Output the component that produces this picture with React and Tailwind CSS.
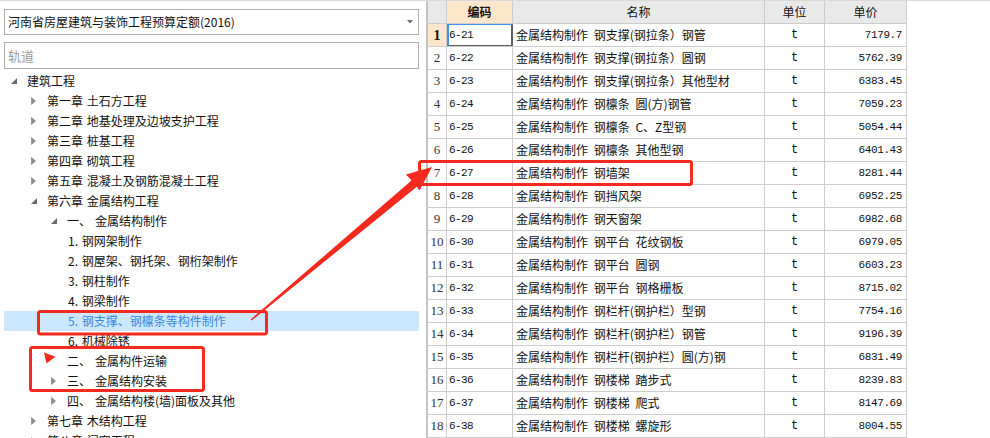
import React from "react";

const tree = [
  { lv: 0, icon: "open", text: "建筑工程" },
  { lv: 1, icon: "closed", text: "第一章 土石方工程" },
  { lv: 1, icon: "closed", text: "第二章 地基处理及边坡支护工程" },
  { lv: 1, icon: "closed", text: "第三章 桩基工程" },
  { lv: 1, icon: "closed", text: "第四章 砌筑工程" },
  { lv: 1, icon: "closed", text: "第五章 混凝土及钢筋混凝土工程" },
  { lv: 1, icon: "open", text: "第六章 金属结构工程" },
  { lv: 2, icon: "open", num: "一、", text: "金属结构制作" },
  { lv: 3, text: "1. 钢网架制作" },
  { lv: 3, text: "2. 钢屋架、钢托架、钢桁架制作" },
  { lv: 3, text: "3. 钢柱制作" },
  { lv: 3, text: "4. 钢梁制作" },
  { lv: 3, text: "5. 钢支撑、钢檩条等构件制作", selected: true },
  { lv: 3, text: "6. 机械除锈" },
  { lv: 2, num: "二、", text: "金属构件运输" },
  { lv: 2, icon: "closed", num: "三、", text: "金属结构安装" },
  { lv: 2, icon: "closed", num: "四、", text: "金属结构楼(墙)面板及其他" },
  { lv: 1, icon: "closed", text: "第七章 木结构工程" },
  { lv: 1, icon: "closed", text: "第八章 门窗工程" },
];

const indent = ["w-[4px]", "w-[24px]", "w-[44px]", "w-[64px]"];

const rows = [
  ["6-21", "金属结构制作 钢支撑(钢拉条）钢管", "7179.7"],
  ["6-22", "金属结构制作 钢支撑(钢拉条）圆钢", "5762.39"],
  ["6-23", "金属结构制作 钢支撑(钢拉条）其他型材", "6383.45"],
  ["6-24", "金属结构制作 钢檩条 圆(方)钢管", "7059.23"],
  ["6-25", "金属结构制作 钢檩条 C、Z型钢", "5054.44"],
  ["6-26", "金属结构制作 钢檩条 其他型钢", "6401.43"],
  ["6-27", "金属结构制作 钢墙架", "8281.44"],
  ["6-28", "金属结构制作 钢挡风架", "6952.25"],
  ["6-29", "金属结构制作 钢天窗架", "6982.68"],
  ["6-30", "金属结构制作 钢平台 花纹钢板", "6979.05"],
  ["6-31", "金属结构制作 钢平台 圆钢", "6603.23"],
  ["6-32", "金属结构制作 钢平台 钢格栅板", "8715.02"],
  ["6-33", "金属结构制作 钢栏杆(钢护栏）型钢", "7754.16"],
  ["6-34", "金属结构制作 钢栏杆(钢护栏）钢管", "9196.39"],
  ["6-35", "金属结构制作 钢栏杆(钢护栏）圆(方)钢", "6831.49"],
  ["6-36", "金属结构制作 钢楼梯 踏步式", "8239.83"],
  ["6-37", "金属结构制作 钢楼梯 爬式", "8147.69"],
  ["6-38", "金属结构制作 钢楼梯 螺旋形", "8004.55"],
];

const TreeIcon = ({ type }) => {
  if (type === "open") {
    return (
      <svg width="6" height="6" viewBox="0 0 6 6">
        <polygon points="6,0 6,6 0,6" fill="#6a6a6a" />
      </svg>
    );
  }
  if (type === "closed") {
    return (
      <svg width="5" height="8" viewBox="0 0 5 8">
        <polygon points="0.5,0.5 4.5,4 0.5,7.5" fill="#8c8c8c" stroke="#7a7a7a" strokeWidth="0.6" />
      </svg>
    );
  }
  return null;
};

const LeftPanel = () => (
  <div className="w-[426px] shrink-0 pl-[4px] pr-[7px]">
    <div className="mt-[8px] h-[26px] border border-[#acacac] flex items-center justify-between pl-[3px] pr-[5px] text-[12px] text-[#111]">
      <span>河南省房屋建筑与装饰工程预算定额(2016)</span>
      <svg width="6" height="4" viewBox="0 0 6 4">
        <polygon points="0,0 6,0 3,3.5" fill="#707070" />
      </svg>
    </div>
    <div className="mt-[7px] h-[27px] border border-[#acacac] flex items-center pl-[3px] text-[13px] text-[#9b9b9b]">
      轨道
    </div>
    <div className="mt-[2px]">
      {tree.map((item, i) => (
        <div
          key={i}
          className={
            "h-[20px] flex items-center text-[12px] leading-[20px] [word-spacing:1px] " +
            (item.selected ? "bg-[#cce8ff] text-[#3b87dc]" : "text-[#111]")
          }
        >
          <div className={indent[item.lv] + " shrink-0"} />
          {item.lv < 3 && (
            <div className="w-[19px] shrink-0 pl-[3px] flex items-center">
              <TreeIcon type={item.icon} />
            </div>
          )}
          {item.num && <span className="w-[28px] shrink-0">{item.num}</span>}
          <span className="whitespace-nowrap">{item.text}</span>
        </div>
      ))}
    </div>
  </div>
);

const Table = () => (
  <div className="w-[481px] shrink-0 text-[12px] text-[#111]">
    <div className="flex h-[23px] border-b border-[#cdcdcd] bg-[#e9e9e9]">
      <div className="w-[21px] border-l-2 border-l-[#c4c4c4] border-r border-[#cdcdcd]" />
      <div className="w-[66px] border-r border-[#cdcdcd] bg-[#fde6c9] flex items-center justify-center font-bold">
        编码
      </div>
      <div className="w-[252px] border-r border-[#cdcdcd] flex items-center justify-center">名称</div>
      <div className="w-[60px] border-r border-[#cdcdcd] flex items-center justify-center">单位</div>
      <div className="w-[82px] border-r border-[#cdcdcd] flex items-center justify-center">单价</div>
    </div>
    {rows.map(([code, name, price], i) => (
      <div key={code} className="flex h-[23px] border-b border-[#cdcdcd]">
        <div
          className={
            "w-[21px] border-l-2 border-l-[#c4c4c4] border-r border-[#cdcdcd] flex items-center justify-center font-['Liberation_Serif',serif] " +
            (i === 0 ? "bg-[#fde6c9] font-bold text-[14px]" : "text-[13px] text-[#333]")
          }
        >
          {i + 1}
        </div>
        <div
          className={
            "w-[66px] flex items-center font-['Liberation_Mono',monospace] text-[11px] tracking-[-0.6px] " +
            (i === 0
              ? "border-l-2 border-l-[#3d94f6] border-t border-t-[#3d94f6] border-r-2 border-r-[#5f5f5f] border-b border-b-[#5f5f5f] pl-[0px]"
              : "border-r border-[#cdcdcd] pl-[2px]")
          }
        >
          {code}
        </div>
        <div className="w-[252px] border-r border-[#cdcdcd] flex items-center pl-[3px] whitespace-nowrap overflow-hidden [word-spacing:3px]">
          {name}
        </div>
        <div className="w-[60px] border-r border-[#cdcdcd] flex items-center justify-center font-['Liberation_Mono',monospace] text-[12px]">
          t
        </div>
        <div className="w-[82px] border-r border-[#cdcdcd] flex items-center justify-end pr-[4px] font-['Liberation_Mono',monospace] text-[11px] tracking-[-0.4px]">
          {price}
        </div>
      </div>
    ))}
  </div>
);

const Annotations = () => (
  <svg className="absolute inset-0 pointer-events-none" width="990" height="438" viewBox="0 0 990 438">
    <g fill="none" stroke="#f42a1e" strokeWidth="3">
      <rect x="38.5" y="310.5" width="228" height="22.5" rx="2" />
      <rect x="30.5" y="346.5" width="173" height="43" rx="2" />
      <rect x="419.5" y="160.5" width="272" height="23" rx="2" />
    </g>
    <polygon
      points="250.6,318.5 411.5,179.5 406,173.5 432,166 419.5,189.5 416.8,185.8 251.6,319.6"
      fill="#f42a1e"
    />
    <polygon points="44,351.5 55.5,355.8 46.5,362.5" fill="#f42a1e" />
  </svg>
);

export default function App() {
  return (
    <div className="relative w-[990px] h-[438px] overflow-hidden bg-white border-t border-[#dadada] font-['Noto_Sans_CJK_SC',sans-serif]">
      <div className="flex">
        <LeftPanel />
        <Table />
      </div>
      <Annotations />
    </div>
  );
}
